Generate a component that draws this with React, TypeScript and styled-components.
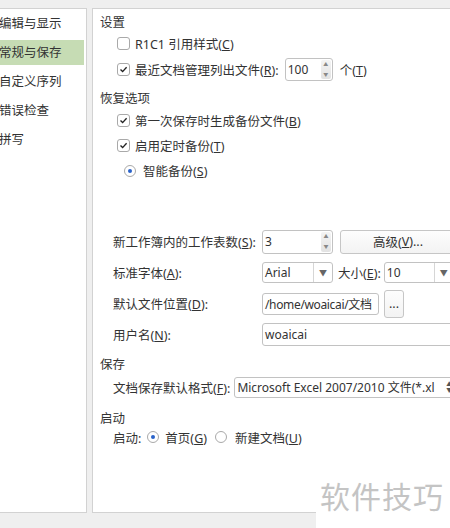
import React from "react";
import styled, { createGlobalStyle } from "styled-components";

const GlobalStyle = createGlobalStyle`
  html, body {
    margin: 0;
    padding: 0;
    background: #efefef;
  }
  body {
    font-family: "Noto Sans", "Noto Sans CJK SC", sans-serif;
    font-size: 12.5px;
    color: #333;
  }
`;

const categories = ["编辑与显示", "常规与保存", "自定义序列", "错误检查", "拼写"];

const Page = styled.div`
  position: relative;
  width: 450px;
  height: 528px;
  overflow: hidden;
  display: flex;
  align-items: flex-start;
  gap: 5px;
  padding-top: 8px;
  box-sizing: border-box;
`;

const Sidebar = styled.ul`
  flex: none;
  width: 91px;
  height: 505px;
  margin: 0 0 0 -4px;
  padding: 2px 0 0;
  box-sizing: border-box;
  list-style: none;
  background: #fff;
  border: 1px solid #d2d2d2;
  display: flex;
  flex-direction: column;
  gap: 4px;
`;

const SidebarItem = styled.li<{ $active?: boolean }>`
  height: 25px;
  line-height: 25px;
  padding-left: 2px;
  margin-right: 2px;
  white-space: nowrap;
  background: ${(p) => (p.$active ? "#c6dcb4" : "transparent")};
`;

const Panel = styled.section`
  flex: none;
  width: 380px;
  height: 505px;
  box-sizing: border-box;
  background: #fff;
  border: 1px solid #d2d2d2;
  padding: 4px 0 0 7px;
  display: flex;
  flex-direction: column;
`;

const Heading = styled.div<{ $h?: number; $top?: number }>`
  height: ${(p) => p.$h ?? 20}px;
  line-height: ${(p) => p.$h ?? 20}px;
  margin-top: ${(p) => p.$top ?? 0}px;
`;

const Row = styled.div<{ $h: number; $indent: number; $gap?: number }>`
  height: ${(p) => p.$h}px;
  display: flex;
  align-items: center;
  gap: ${(p) => p.$gap ?? 5}px;
  padding-left: ${(p) => p.$indent}px;
  white-space: nowrap;
`;

const Spacer = styled.div<{ $h: number }>`
  flex: none;
  height: ${(p) => p.$h}px;
`;

const Box = styled.span`
  flex: none;
  width: 11px;
  height: 11px;
  border: 1px solid #a9a9a9;
  border-radius: 3px;
  background: #fff;
  display: flex;
  align-items: center;
  justify-content: center;
`;

const Radio = styled.span<{ $on?: boolean }>`
  flex: none;
  width: 10px;
  height: 10px;
  border: 1px solid #a9a9a9;
  border-radius: 50%;
  background: #fff;
  display: flex;
  align-items: center;
  justify-content: center;

  &::after {
    content: "";
    width: 4px;
    height: 4px;
    border-radius: 50%;
    background: ${(p) => (p.$on ? "#2a62c9" : "transparent")};
  }
`;

const Label = styled.span<{ $w?: number }>`
  ${(p) => (p.$w ? `width: ${p.$w}px; flex: none;` : "")}
`;

const Field = styled.div<{ $w: number; $h: number }>`
  flex: none;
  width: ${(p) => p.$w}px;
  height: ${(p) => p.$h}px;
  box-sizing: border-box;
  border: 1px solid #c2c2c2;
  border-radius: 3px;
  background: #fff;
  display: flex;
  align-items: stretch;
  overflow: hidden;
`;

const FieldText = styled.span<{ $tight?: boolean }>`
  flex: 1;
  min-width: 0;
  padding-left: 2px;
  display: flex;
  align-items: center;
  overflow: hidden;
  white-space: nowrap;
  font-size: 12px;
  letter-spacing: ${(p) => (p.$tight ? "-0.35px" : "0")};
`;

const SpinButtons = styled.span`
  flex: none;
  width: 10px;
  margin: 1px;
  border-radius: 2px;
  background: linear-gradient(#f4f4f4, #e2e2e2);
  display: flex;
  flex-direction: column;
  align-items: center;
  justify-content: space-around;
  font-size: 5px;
  color: #888;
  line-height: 1;
`;

const ComboArrow = styled.span`
  flex: none;
  width: 18px;
  border-left: 1px solid #d6d6d6;
  display: flex;
  align-items: center;
  justify-content: center;
  font-size: 8px;
  color: #666;
`;

const UpDown = styled.span`
  flex: none;
  width: 12px;
  display: flex;
  flex-direction: column;
  align-items: center;
  justify-content: center;
  font-size: 6px;
  line-height: 6px;
  color: #555;
`;

const Button = styled.div<{ $w: number; $h: number }>`
  flex: none;
  width: ${(p) => p.$w}px;
  height: ${(p) => p.$h}px;
  box-sizing: border-box;
  border: 1px solid #c6c6c6;
  border-radius: 3px;
  background: linear-gradient(#fdfdfd, #f3f3f3);
  display: flex;
  align-items: center;
  justify-content: center;
`;

const Watermark = styled.div`
  position: absolute;
  left: 316px;
  top: 461px;
  right: 0;
  bottom: 0;
  background: #fff;
  display: flex;
  align-items: center;
  padding-left: 4px;
  font-family: "Noto Sans CJK SC", sans-serif;
  font-size: 30px;
  letter-spacing: 1px;
  color: #c4c4c4;
`;

const Check = () => (
  <Box>
    <svg width="9" height="9" viewBox="0 0 9 9">
      <path d="M1.5 4.6 L3.6 6.6 L7.6 2.2" fill="none" stroke="#222" strokeWidth="1.4" />
    </svg>
  </Box>
);

const Spin = ({ value, w, h }: { value: string; w: number; h: number }) => (
  <Field $w={w} $h={h}>
    <FieldText>{value}</FieldText>
    <SpinButtons>
      <span>▲</span>
      <span>▼</span>
    </SpinButtons>
  </Field>
);

const Combo = ({ value, w }: { value: string; w: number }) => (
  <Field $w={w} $h={21}>
    <FieldText>{value}</FieldText>
    <ComboArrow>▼</ComboArrow>
  </Field>
);

export default function App() {
  return (
    <>
      <GlobalStyle />
      <Page>
        <Sidebar>
          {categories.map((c) => (
            <SidebarItem key={c} $active={c === "常规与保存"}>
              {c}
            </SidebarItem>
          ))}
        </Sidebar>

        <Panel>
          <Heading>设置</Heading>
          <Row $h={20} $indent={17}>
            <Box />
            <Label>R1C1 引用样式(<u>C</u>)</Label>
          </Row>
          <Row $h={33} $indent={17} $gap={0}>
            <Check />
            <Label style={{ marginLeft: 5 }}>最近文档管理列出文件(<u>R</u>):</Label>
            <span style={{ width: 6 }} />
            <Spin value="100" w={48} h={23} />
            <Label style={{ marginLeft: 7 }}>个(<u>T</u>)</Label>
          </Row>

          <Heading $h={18} $top={4}>恢复选项</Heading>
          <Row $h={25} $indent={17}>
            <Check />
            <Label>第一次保存时生成备份文件(<u>B</u>)</Label>
          </Row>
          <Row $h={25} $indent={17}>
            <Check />
            <Label>启用定时备份(<u>T</u>)</Label>
          </Row>
          <Row $h={25} $indent={24} $gap={7}>
            <Radio $on />
            <Label>智能备份(<u>S</u>)</Label>
          </Row>

          <Spacer $h={43} />

          <Row $h={31} $indent={13} $gap={1}>
            <Label $w={148}>新工作簿内的工作表数(<u>S</u>):</Label>
            <Spin value="3" w={71} h={24} />
            <span style={{ width: 5 }} />
            <Button $w={116} $h={24}>高级(<u>V</u>)...</Button>
          </Row>
          <Row $h={31} $indent={13} $gap={1}>
            <Label $w={148}>标准字体(<u>A</u>):</Label>
            <Combo value="Arial" w={71} />
            <Label style={{ margin: "0 2px 0 4px" }}>大小(<u>E</u>):</Label>
            <Combo value="10" w={70} />
          </Row>
          <Row $h={31} $indent={13} $gap={1}>
            <Label $w={148}>默认文件位置(<u>D</u>):</Label>
            <Field $w={117} $h={22}>
              <FieldText $tight>/home/woaicai/文档</FieldText>
            </Field>
            <span style={{ width: 3 }} />
            <Button $w={20} $h={28}>...</Button>
          </Row>
          <Row $h={31} $indent={13} $gap={1}>
            <Label $w={148}>用户名(<u>N</u>):</Label>
            <Field $w={210} $h={23}>
              <FieldText>woaicai</FieldText>
            </Field>
          </Row>

          <Heading $top={5}>保存</Heading>
          <Row $h={24} $indent={13} $gap={4}>
            <Label>文档保存默认格式(<u>F</u>):</Label>
            <Field $w={222} $h={21}>
              <FieldText>Microsoft Excel 2007/2010 文件(*.xl</FieldText>
              <UpDown>
                <span>▲</span>
                <span>▼</span>
              </UpDown>
            </Field>
          </Row>

          <Heading $h={18} $top={11}>启动</Heading>
          <Row $h={18} $indent={13} $gap={6}>
            <Label>启动:</Label>
            <Radio $on />
            <Label style={{ marginRight: 2 }}>首页(<u>G</u>)</Label>
            <Radio />
            <Label style={{ marginLeft: 2 }}>新建文档(<u>U</u>)</Label>
          </Row>
        </Panel>

        <Watermark>软件技巧</Watermark>
      </Page>
    </>
  );
}
